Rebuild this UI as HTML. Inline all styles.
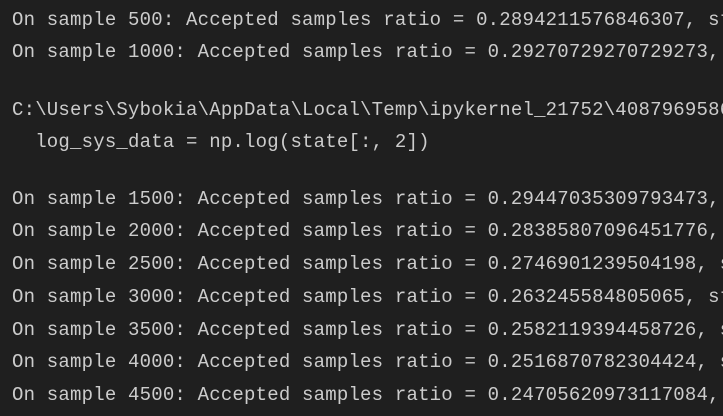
<!DOCTYPE html>
<html><head><style>
html,body{margin:0;padding:0;background:#1f1f1f;width:723px;height:416px;overflow:hidden}
div{position:absolute;left:12px;font-family:"Liberation Mono",monospace;font-size:19px;letter-spacing:0.2px;color:#cccccc;white-space:pre;line-height:24px}
</style></head><body>
<div style="top:8px">On sample 500: Accepted samples ratio = 0.2894211576846307, st</div>
<div style="top:40px">On sample 1000: Accepted samples ratio = 0.29270729270729273, </div>
<div style="top:98px">C:\Users\Sybokia\AppData\Local\Temp\ipykernel_21752\4087969586</div>
<div style="top:130px">  log_sys_data = np.log(state[:, 2])</div>
<div style="top:187px">On sample 1500: Accepted samples ratio = 0.29447035309793473, </div>
<div style="top:219px">On sample 2000: Accepted samples ratio = 0.28385807096451776, </div>
<div style="top:252px">On sample 2500: Accepted samples ratio = 0.2746901239504198, s</div>
<div style="top:285px">On sample 3000: Accepted samples ratio = 0.263245584805065, st</div>
<div style="top:318px">On sample 3500: Accepted samples ratio = 0.2582119394458726, s</div>
<div style="top:350px">On sample 4000: Accepted samples ratio = 0.2516870782304424, s</div>
<div style="top:383px">On sample 4500: Accepted samples ratio = 0.24705620973117084, </div>
</body></html>
